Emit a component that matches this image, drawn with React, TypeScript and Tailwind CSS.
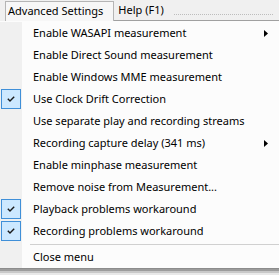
import React from "react";

const items: { label: string; checked?: boolean; sub?: boolean }[] = [
  { label: "Enable WASAPI measurement", sub: true },
  { label: "Enable Direct Sound measurement" },
  { label: "Enable Windows MME measurement" },
  { label: "Use Clock Drift Correction", checked: true },
  { label: "Use separate play and recording streams" },
  { label: "Recording capture delay (341 ms)", sub: true },
  { label: "Enable minphase measurement" },
  { label: "Remove noise from Measurement..." },
  { label: "Playback problems workaround", checked: true },
  { label: "Recording problems workaround", checked: true },
];

function Row({ label, checked, sub }: { label: string; checked?: boolean; sub?: boolean }) {
  return (
    <div className="flex h-[22px] items-center">
      <div className="flex h-full w-[22px] shrink-0 items-center justify-center bg-[#f0f0f0]">
        {checked && (
          <div className="flex h-[20px] w-[20px] items-center justify-center border border-[#3f8fd8] bg-[#cce8ff]">
            <svg width="8" height="6" viewBox="0 0 8 6">
              <path d="M0.8 2.8 L3 5 L7.2 0.8" fill="none" stroke="#1a1a1a" strokeWidth="1.4" />
            </svg>
          </div>
        )}
      </div>
      <div className="ml-[11px] flex-1 whitespace-nowrap text-[11px] text-black">{label}</div>
      {sub && (
        <svg width="4" height="7" viewBox="0 0 4 7" className="mr-[11px]">
          <path d="M0 0 L4 3.5 L0 7 Z" fill="#000" />
        </svg>
      )}
    </div>
  );
}

export default function App() {
  return (
    <div
      className="h-[275px] w-[279px] overflow-hidden bg-[#f0f0f0]"
      style={{ fontFamily: '"Noto Sans", sans-serif' }}
    >
      <div className="flex h-[21px] items-end bg-[#f0f0f0] text-[11px] text-black">
        <div className="ml-[5px] flex h-[20px] items-center border border-b-0 border-[#b5b5b5] bg-[#f7f7f7] pl-[2px] pr-[10px]">
          Advanced Settings
        </div>
        <div className="flex h-full flex-1 border-b border-[#a0a0a0]">
          <div className="flex h-full items-center pl-[4px] pr-[10px]">Help (F1)</div>
          <div className="mb-[5px] mr-[6px] flex-1 self-end border-b border-dotted border-[#bdbdbd]" />
        </div>
      </div>
      <div className="flex flex-col bg-[#fcfcfc] pt-[1px]">
        {items.map((it) => (
          <Row key={it.label} {...it} />
        ))}
        <div className="flex h-[4px] items-center">
          <div className="h-full w-[22px] bg-[#f0f0f0]" />
          <div className="ml-[8px] flex-1 border-t border-[#d0d0d0]" />
        </div>
        <Row label="Close menu" />
      </div>
      <div className="h-[1px] bg-[#8c8c8c]" />
      <div className="h-[2px] bg-[#9c9c9c]" />
      <div className="h-[2px] bg-[#c8c8c8]" />
      <div className="h-[2px] bg-[#e8e8e8]" />
    </div>
  );
}
